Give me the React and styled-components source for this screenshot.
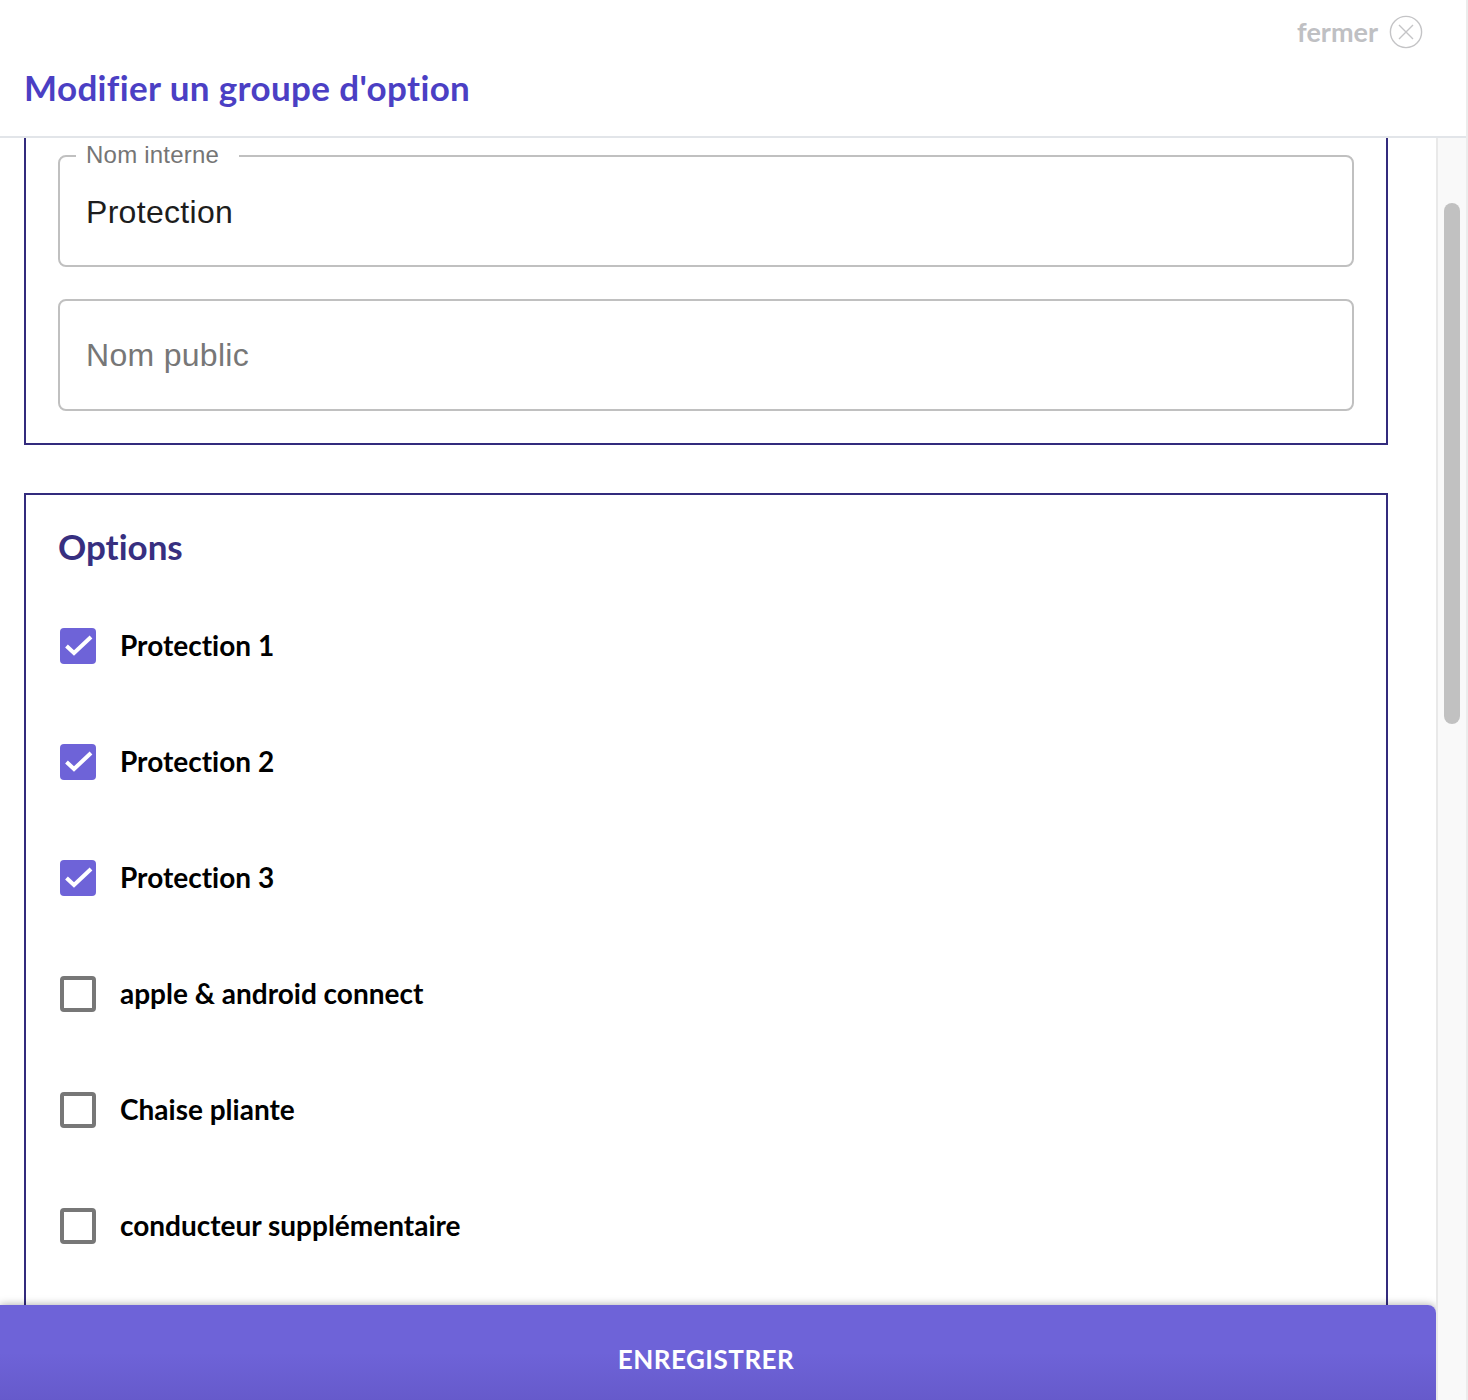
import React from 'react'
import styled, { createGlobalStyle } from 'styled-components'

const options = [
  { label: 'Protection 1', checked: true },
  { label: 'Protection 2', checked: true },
  { label: 'Protection 3', checked: true },
  { label: 'apple & android connect', checked: false },
  { label: 'Chaise pliante', checked: false },
  { label: 'conducteur supplémentaire', checked: false },
]

const App = () => {
  return (
    <Page>
      <GlobalStyle />
      <Header>
        <CloseRow>
          <CloseText>fermer</CloseText>
          <svg width="34" height="34" viewBox="0 0 34 34" fill="none" stroke="#c4c4c6" strokeWidth="1.4">
            <circle cx="17" cy="17" r="15.6" />
            <path d="M10 10 L24 24 M24 10 L10 24" />
          </svg>
        </CloseRow>
        <Title>Modifier un groupe d'option</Title>
      </Header>
      <Body>
        <Content>
          <NamePanel>
            <OutlinedField>
              <FieldLegend>Nom interne</FieldLegend>
              <FieldValue>Protection</FieldValue>
            </OutlinedField>
            <PlainField>
              <FieldValue $placeholder>Nom public</FieldValue>
            </PlainField>
          </NamePanel>
          <OptionsPanel>
            <PanelTitle>Options</PanelTitle>
            <OptionList>
              {options.map((option) => (
                <OptionRow key={option.label}>
                  <CheckBox $checked={option.checked}>
                    {option.checked && (
                      <svg width="36" height="36" viewBox="0 0 36 36" fill="none" stroke="#fff" strokeWidth="4">
                        <path d="M6.5 18 L14 25 L31 9" />
                      </svg>
                    )}
                  </CheckBox>
                  <OptionLabel>{option.label}</OptionLabel>
                </OptionRow>
              ))}
            </OptionList>
          </OptionsPanel>
          <SaveBar>ENREGISTRER</SaveBar>
        </Content>
        <ScrollTrack>
          <ScrollThumb />
        </ScrollTrack>
      </Body>
    </Page>
  )
}

const GlobalStyle = createGlobalStyle`
  html, body {
    margin: 0;
    padding: 0;
    background: #fff;
    overflow: hidden;
  }
  * {
    box-sizing: border-box;
  }
`

const Page = styled.div`
  width: 1468px;
  height: 1400px;
  display: flex;
  flex-direction: column;
  overflow: hidden;
  background: #fff;
  border-right: 2px solid #ececec;
  font-family: "Lato", "Liberation Sans", sans-serif;
  font-variant-ligatures: none;
`

const Header = styled.header`
  height: 138px;
  flex: none;
  padding: 15px 43px 0 24px;
  background: #fff;
  border-bottom: 2px solid #e2e5e9;
`

const CloseRow = styled.div`
  display: flex;
  justify-content: flex-end;
  align-items: center;
  gap: 11px;
  height: 34px;
`

const CloseText = styled.span`
  font-size: 27px;
  line-height: 32px;
  font-weight: 700;
  color: #bfc0c3;
`

const Title = styled.h1`
  margin: 15px 0 0;
  font-size: 35px;
  line-height: 46px;
  font-weight: 700;
  letter-spacing: 0.37px;
  color: #4b3fc4;
`

const Body = styled.div`
  flex: 1;
  display: flex;
  min-height: 0;
`

const Content = styled.main`
  position: relative;
  width: 1436px;
  flex: none;
  padding: 0 48px 0 24px;
  overflow: hidden;
`

const Panel = styled.section`
  width: 1364px;
  border: 2px solid #332b7d;
  padding: 0 32px;
`

const NamePanel = styled(Panel)`
  height: 307px;
  border-top: none;
  padding-top: 5px;
`

const OptionsPanel = styled(Panel)`
  margin-top: 48px;
  height: 900px;
  padding-top: 29px;
`

const OutlinedField = styled.fieldset`
  margin: 0;
  height: 124px;
  padding: 0 0 0 16px;
  border: 2px solid #c0c0c0;
  border-radius: 8px;
`

const FieldLegend = styled.legend`
  padding: 0 20px 2px 10px;
  font-family: "Liberation Sans", sans-serif;
  font-size: 24px;
  line-height: 24px;
  letter-spacing: 0.225px;
  color: #757575;
`

const PlainField = styled.div`
  margin-top: 32px;
  height: 112px;
  padding-left: 26px;
  border: 2px solid #c0c0c0;
  border-radius: 8px;
  display: flex;
  align-items: center;
`

const FieldValue = styled.div`
  font-family: "Liberation Sans", sans-serif;
  font-size: 32px;
  line-height: 40px;
  letter-spacing: 0.3px;
  color: ${(p) => (p.$placeholder ? '#777' : '#1d1d1d')};
  padding-left: ${(p) => (p.$placeholder ? '0' : '10px')};
  padding-top: ${(p) => (p.$placeholder ? '0' : '23px')};
`

const PanelTitle = styled.h2`
  margin: 0;
  font-size: 35px;
  line-height: 44px;
  font-weight: 700;
  color: #372f80;
`

const OptionList = styled.div`
  margin-top: 60px;
  display: flex;
  flex-direction: column;
  gap: 80px;
`

const OptionRow = styled.label`
  display: flex;
  align-items: center;
  gap: 24px;
  height: 36px;
  padding-left: 2px;
`

const CheckBox = styled.span`
  width: 36px;
  height: 36px;
  flex: none;
  display: flex;
  align-items: center;
  justify-content: center;
  border-radius: 4px;
  background: ${(p) => (p.$checked ? '#6e63d8' : '#fff')};
  border: ${(p) => (p.$checked ? 'none' : '4px solid #777')};
`

const OptionLabel = styled.span`
  font-size: 28px;
  line-height: 34px;
  margin-bottom: 2px;
  font-weight: 700;
  color: #000;
`

const SaveBar = styled.button`
  position: absolute;
  left: 0;
  right: 0;
  top: 1167px;
  height: 95px;
  padding: 12px 24px 0 0;
  border: none;
  border-radius: 0 8px 0 0;
  background: linear-gradient(#6e63d8 50%, #665acb);
  box-shadow: 0 0 8px rgba(0, 0, 0, 0.35);
  color: #fff;
  font-family: "Lato", "Liberation Sans", sans-serif;
  font-size: 26px;
  font-weight: 700;
  letter-spacing: 0.5px;
`

const ScrollTrack = styled.div`
  position: relative;
  flex: 1;
  background: #f9f9f9;
  border-left: 2px solid #e9e9e9;
`

const ScrollThumb = styled.div`
  position: absolute;
  top: 65px;
  left: 6px;
  width: 16px;
  height: 521px;
  border-radius: 8px;
  background: #c1c1c1;
`

export default App
